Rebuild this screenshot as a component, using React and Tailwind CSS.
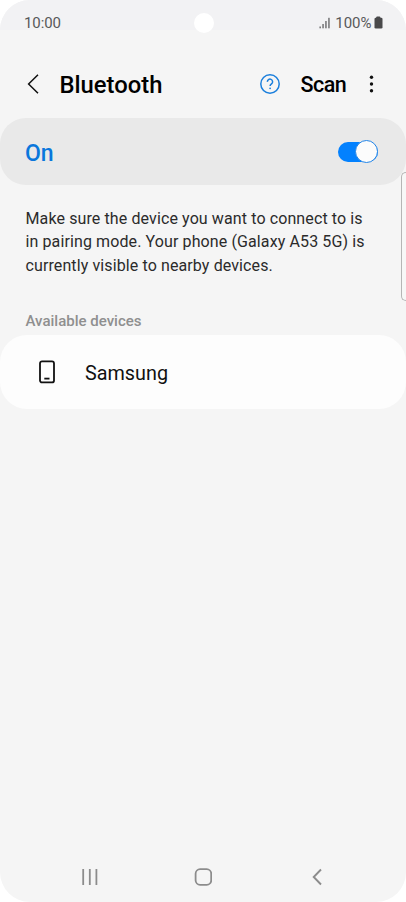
import React, { useState } from "react";

function StatusBar() {
  return (
    <div className="relative flex h-[30px] items-center justify-between bg-[#f2f2f4] pr-[23.5px] pl-6 text-[#58585a]">
      <span className="mt-[15px] text-[15px] leading-[30px] tracking-[-0.1px]">10:00</span>
      <div className="absolute top-[12.5px] left-[193.5px] h-[20.5px] w-[20.5px] rounded-full bg-white" />
      <div className="mt-[15px] flex h-[30px] items-center">
        <svg width="12" height="12" viewBox="0 0 12 12" className="mr-1" fill="#5f5f61">
          <rect x="0.5" y="9.5" width="1.3" height="1.8" />
          <rect x="3.4" y="7" width="1.3" height="4.3" />
          <rect x="6.3" y="4" width="1.3" height="7.3" />
          <rect x="9.3" y="0.8" width="1.3" height="10.5" />
        </svg>
        <span className="text-[15px] leading-[30px]">100%</span>
        <svg width="9" height="13" viewBox="0 0 9 13" className="ml-0.5" fill="#48484a">
          <rect x="2.3" y="0.5" width="4" height="3" rx="0.8" />
          <rect x="0.5" y="1.8" width="8" height="10.8" rx="1.3" />
        </svg>
      </div>
    </div>
  );
}

function Header() {
  return (
    <header className="flex h-[88px] items-center pt-[21px] pl-[26px] text-black">
      <button className="mb-[1px] w-[33.5px]">
        <svg width="14" height="22" viewBox="0 0 14 22" fill="none">
          <path d="M12 1.7 2.6 11l9.4 9.3" stroke="#111" strokeWidth="1.5" />
        </svg>
      </button>
      <h1 className="mt-[2px] w-[200.5px] text-[23.8px] font-medium">Bluetooth</h1>
      <button className="mb-[2px] w-[40.5px]">
        <svg width="20" height="20" viewBox="0 0 20 20" fill="none" stroke="#1b7fdc" strokeWidth="1.5">
          <circle cx="10" cy="10" r="9.2" />
          <path d="M7.4 7.9a2.6 2.6 0 1 1 4.3 1.8c-1 .8-1.6 1.2-1.6 2.2" />
          <circle cx="10.1" cy="14.3" r="0.9" fill="#1b7fdc" stroke="none" />
        </svg>
      </button>
      <button className="mt-[1px] w-[68px] text-left text-[21.5px] font-medium tracking-[-0.5px]">Scan</button>
      <button className="mb-[2px]">
        <svg width="5" height="18" viewBox="0 0 5 18" fill="#111">
          <circle cx="2.5" cy="2.2" r="1.7" />
          <circle cx="2.5" cy="9" r="1.7" />
          <circle cx="2.5" cy="15.8" r="1.7" />
        </svg>
      </button>
    </header>
  );
}

function PowerRow() {
  const [on, setOn] = useState(true);

  return (
    <div className="flex h-[67px] items-center justify-between rounded-[26px] bg-[#e9e9e9] pr-7 pl-[25px]">
      <span className="mt-[5px] text-[23px] font-medium text-[#0a77dc]">{on ? "On" : "Off"}</span>
      <button
        onClick={() => setOn(!on)}
        className={`flex h-5 w-10 items-center rounded-full ${on ? "justify-end bg-[#0381fe]" : "justify-start bg-gray-400"}`}
      >
        <span className="h-[23px] w-[23px] shrink-0 rounded-full border border-[#2385e8] bg-[#fcfcfc]" />
      </button>
    </div>
  );
}

function NavBar() {
  return (
    <nav className="mt-auto flex h-[50px] items-center justify-between pr-[83px] pl-[81px] text-[#8c8c8c]">
      <svg width="18" height="18" viewBox="0 0 18 18" stroke="currentColor" strokeWidth="1.8">
        <path d="M2.2 1v16M8.8 1v16M15.4 1v16" />
      </svg>
      <svg width="18" height="18" viewBox="0 0 18 18" className="mr-[5px]" fill="none" stroke="currentColor" strokeWidth="1.8">
        <rect x="1.6" y="1.2" width="15.6" height="15.6" rx="4.5" />
      </svg>
      <svg width="11" height="18" viewBox="0 0 11 18" fill="none" stroke="currentColor" strokeWidth="1.9">
        <path d="M9 1.5 1.7 9 9 16.5" />
      </svg>
    </nav>
  );
}

export default function App() {
  return (
    <div className="h-[902px] w-[406px] bg-white font-['Roboto',sans-serif]">
      <div className="relative flex h-full flex-col overflow-hidden rounded-[30px] bg-[#f5f5f5]">
        <StatusBar />
        <Header />
        <PowerRow />
        <p className="mt-[21.7px] pl-[25.5px] text-[16px] leading-[23.5px] tracking-[0.11px] whitespace-nowrap text-[#2b2b2b]">
          Make sure the device you want to connect to is
          <br />
          in pairing mode. Your phone (Galaxy A53 5G) is
          <br />
          currently visible to nearby devices.
        </p>
        <h2 className="mt-[32.8px] pl-[25.5px] text-[15px] leading-[22px] font-medium text-[#8f8f8f]">
          Available devices
        </h2>
        <div className="mt-[3px] flex h-[74px] items-center rounded-[27px] bg-[#fdfdfd] pl-[39px]">
          <svg width="16" height="24" viewBox="0 0 16 24" fill="none" stroke="#111" strokeWidth="1.8">
            <rect x="1" y="1.4" width="14" height="21" rx="2" />
            <path d="M5.3 18.6h5.2" />
          </svg>
          <span className="mt-[3px] ml-[30px] text-[19.8px] text-[#111]">Samsung</span>
        </div>
        <NavBar />
        {/* edge panel handle */}
        <div className="absolute top-[172px] right-0 h-[129px] w-[5px] rounded-l-[5px] border border-r-0 border-[#b5b5b5] bg-[#f7f7f7]" />
      </div>
    </div>
  );
}
